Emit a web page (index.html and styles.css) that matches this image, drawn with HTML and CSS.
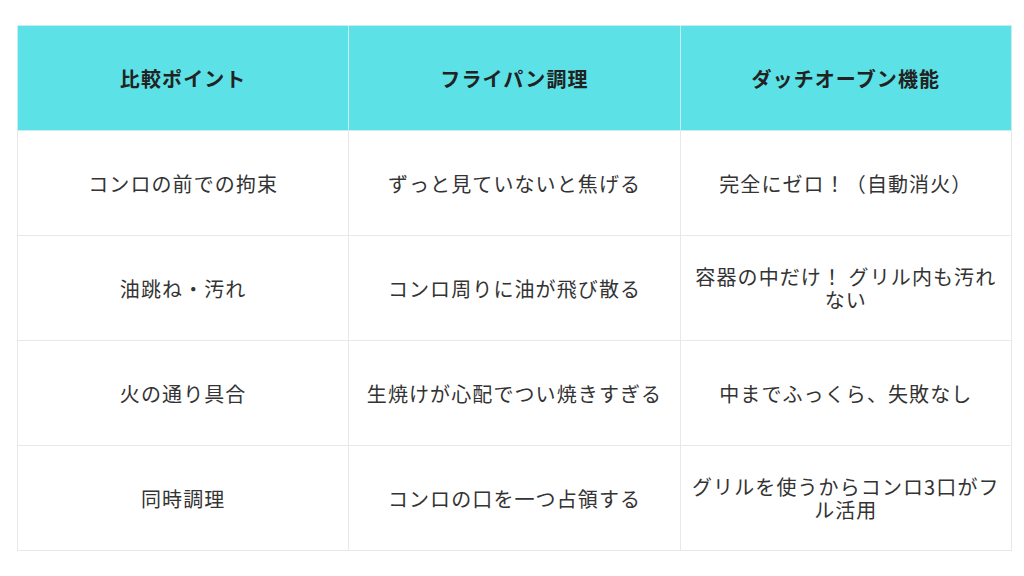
FILE: index.html
```html
<!DOCTYPE html>
<html lang="ja">
<head>
<meta charset="utf-8">
<link rel="stylesheet" href="styles.css">
</head>
<body>
<div class="wrap">
<table class="cmp">
  <thead>
    <tr><th>比較ポイント</th><th>フライパン調理</th><th>ダッチオーブン機能</th></tr>
  </thead>
  <tbody>
    <tr><td>コンロの前での拘束</td><td>ずっと見ていないと焦げる</td><td>完全にゼロ！（自動消火）</td></tr>
    <tr><td>油跳ね・汚れ</td><td>コンロ周りに油が飛び散る</td><td>容器の中だけ！ グリル内も汚れない</td></tr>
    <tr><td>火の通り具合</td><td>生焼けが心配でつい焼きすぎる</td><td>中までふっくら、失敗なし</td></tr>
    <tr><td>同時調理</td><td>コンロの口を一つ占領する</td><td>グリルを使うからコンロ3口がフル活用</td></tr>
  </tbody>
</table>
</div>
</body>
</html>
```
FILE: styles.css
```css
html, body {
  margin: 0;
  padding: 0;
  background: #ffffff;
}
.wrap {
  padding: 25px 12px 0 17px;
}
.cmp {
  width: 995px;
  border-collapse: collapse;
  table-layout: fixed;
  font-family: "Noto Sans CJK JP", "Noto Sans", sans-serif;
  font-size: 20px;
  letter-spacing: 1.1px;
  line-height: 23px;
  color: #333333;
}
.cmp th, .cmp td {
  border: 1px solid #e8e8e8;
  text-align: center;
  vertical-align: middle;
  padding: 0 10px;
  height: 105px;
  box-sizing: border-box;
}
.cmp th {
  background: #5ce1e6;
  color: #222222;
  font-weight: 700;
  border-color: #c8eef0;
}
```
